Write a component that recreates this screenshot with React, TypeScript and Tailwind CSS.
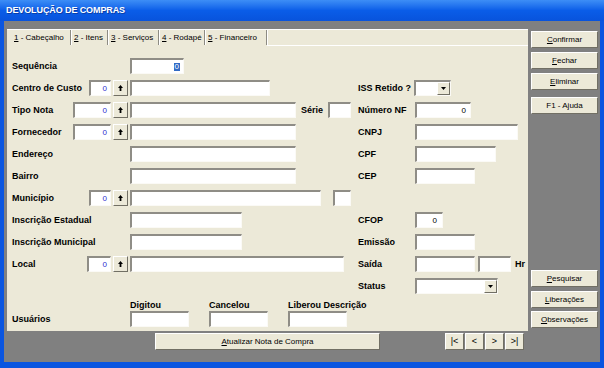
import React from "react";

type Kids = { className?: string; children?: React.ReactNode };

const sunken =
  "h-4 shrink-0 bg-white border-t-2 border-l-2 border-b border-r border-t-[#8f8d86] border-l-[#8f8d86] border-b-[#fbfaf6] border-r-[#fbfaf6]";
const raised =
  "shrink-0 bg-[#ece9d8] border border-t-white border-l-white border-b-[#716f64] border-r-[#716f64]";

function L({ className = "", children }: Kids) {
  return (
    <span className={`shrink-0 h-4 flex items-center text-[9px] font-bold leading-none whitespace-nowrap text-black ${className}`}>
      {children}
    </span>
  );
}

function Box({ className = "", children }: Kids) {
  return (
    <div className={`${sunken} flex items-center justify-end pr-[3px] text-[8px] leading-none ${className}`}>
      {children}
    </div>
  );
}

function Code({ className = "" }: { className?: string }) {
  return <Box className={`text-[#2d2dd0] ${className}`}>0</Box>;
}

function Pick() {
  return (
    <div className={`${raised} ml-[2px] w-[15px] h-4 flex items-center justify-center`}>
      <svg width="5" height="6" viewBox="0 0 5 6">
        <path d="M2.5 0L5 3H3.4V6H1.6V3H0Z" fill="#000" />
      </svg>
    </div>
  );
}

function Select({ className = "" }: { className?: string }) {
  return (
    <div className={`${sunken} flex justify-end ${className}`}>
      <div className={`${raised} w-[13px] h-full flex items-center justify-center`}>
        <svg width="5" height="3" viewBox="0 0 5 3">
          <path d="M0 0H5L2.5 3Z" fill="#000" />
        </svg>
      </div>
    </div>
  );
}

function Btn({ className = "", children }: Kids) {
  return (
    <div className={`${raised} h-[17px] flex items-center justify-center text-[8px] leading-none text-black whitespace-nowrap ${className}`}>
      {children}
    </div>
  );
}

function Row({ left, right }: { left?: React.ReactNode; right?: React.ReactNode }) {
  return (
    <div className="flex h-[22px] pt-px">
      <div className="flex w-[346px] h-4 items-center">{left}</div>
      <div className="flex h-4 items-center">{right}</div>
    </div>
  );
}

const tabs = [
  { n: "1", t: " - Cabeçalho", w: "w-[64px] pl-[7px]" },
  { n: "2", t: " - Itens", w: "w-[37px] pl-[3px]" },
  { n: "3", t: " - Serviços", w: "w-[51px] pl-[3px]" },
  { n: "4", t: " - Rodapé", w: "w-[46px] pl-[3px]" },
  { n: "5", t: " - Financeiro", w: "w-[62px] pl-[3px]" },
];

export default function App() {
  return (
    <div className="w-[604px] h-[368px] flex flex-col overflow-hidden font-['Liberation_Sans',Arial,sans-serif] select-none">
      <div className="h-[21px] shrink-0 flex items-center pl-[6px] bg-gradient-to-b from-[#3d8ef6] via-[#0a5de8] to-[#0853dc]">
        <span className="text-white text-[9px] font-bold tracking-[-0.1px] [text-shadow:1px_1px_0_#0b3fa8]">
          DEVOLUÇÃO DE COMPRAS
        </span>
      </div>

      <div className="flex-1 flex pt-2 bg-[#808080] border-x-4 border-b-[6px] border-[#0a55e0]">
        <div className="w-[524px] pl-[3px] flex flex-col">
          <div className="h-[302px] bg-[#ece9d8] border-t border-white flex flex-col">
            <div className="h-4 flex text-[8px] text-black leading-none">
              {tabs.map((t) => (
                <div
                  key={t.n}
                  className={`${t.w} h-[15px] flex items-center border-r border-[#8d8b83] shadow-[1px_0_0_#fff]`}
                >
                  <span className="whitespace-pre">
                    <u>{t.n}</u>
                    {t.t}
                  </span>
                </div>
              ))}
              <div className="flex-1 border-b border-white" />
            </div>

            <div className="pt-[11px] pl-[5px] flex flex-col">
              <Row left={<><L className="w-[118px]">Sequência</L><Box className="w-[54px] pr-[2px]"><span className="bg-[#316ac5] text-white px-px">0</span></Box></>} />
              <Row
                left={<><L className="w-[77px]">Centro de Custo</L><Code className="w-[22px]" /><Pick /><Box className="ml-[2px] w-[140px]" /></>}
                right={<><L className="w-[56px]">ISS Retido ?</L><Select className="w-[37px]" /></>}
              />
              <Row
                left={<><L className="w-[61px]">Tipo Nota</L><Code className="w-[38px]" /><Pick /><Box className="ml-[2px] w-[166px]" /><L className="ml-[5px] w-[27px]">Série</L><Box className="w-[23px]" /></>}
                right={<><L className="w-[57px]">Número NF</L><Box className="w-[56px] pr-[4px]">0</Box></>}
              />
              <Row
                left={<><L className="w-[61px]">Fornecedor</L><Code className="w-[38px]" /><Pick /><Box className="ml-[2px] w-[166px]" /></>}
                right={<><L className="w-[57px]">CNPJ</L><Box className="w-[103px]" /></>}
              />
              <Row
                left={<><L className="w-[118px]">Endereço</L><Box className="w-[166px]" /></>}
                right={<><L className="w-[57px]">CPF</L><Box className="w-[81px]" /></>}
              />
              <Row
                left={<><L className="w-[118px]">Bairro</L><Box className="w-[166px]" /></>}
                right={<><L className="w-[57px]">CEP</L><Box className="w-[60px]" /></>}
              />
              <Row
                left={<><L className="w-[77px]">Município</L><Code className="w-[22px]" /><Pick /><Box className="ml-[2px] w-[191px]" /><Box className="ml-[12px] w-[18px]" /></>}
              />
              <Row
                left={<><L className="w-[118px]">Inscrição Estadual</L><Box className="w-[112px]" /></>}
                right={<><L className="w-[57px]">CFOP</L><Box className="w-[28px] pr-[5px]">0</Box></>}
              />
              <Row
                left={<><L className="w-[118px]">Inscrição Municipal</L><Box className="w-[112px]" /></>}
                right={<><L className="w-[57px]">Emissão</L><Box className="w-[60px]" /></>}
              />
              <Row
                left={<><L className="w-[75px]">Local</L><Code className="w-[24px]" /><Pick /><Box className="ml-[2px] w-[214px]" /></>}
                right={<><L className="w-[57px]">Saída</L><Box className="w-[60px]" /><Box className="ml-[3px] w-[33px]" /><L className="ml-[4px]">Hr</L></>}
              />
              <Row right={<><L className="w-[57px]">Status</L><Select className="w-[83px]" /></>} />

              <div className="h-8 flex items-start">
                <L className="w-[118px] mt-[12px]">Usuários</L>
                <div className="flex gap-[20px]">
                  {["Digitou", "Cancelou", "Liberou Descrição"].map((u) => (
                    <div key={u} className="w-[59px] flex flex-col">
                      <span className="h-[12px] text-[9px] font-bold leading-[12px] whitespace-nowrap">{u}</span>
                      <Box className="w-[59px]" />
                    </div>
                  ))}
                </div>
              </div>
            </div>
          </div>

          <div className="flex pt-[2px]">
            <Btn className="ml-[148px] w-[225px]">
              <span><u>A</u>tualizar Nota de Compra</span>
            </Btn>
            <div className="ml-[65px] flex gap-px">
              <Btn className="w-[19px] text-[9px]">|&lt;</Btn>
              <Btn className="w-[19px] text-[9px] text-[#b5b2a6]">&lt;</Btn>
              <Btn className="w-[19px] text-[9px]">&gt;</Btn>
              <Btn className="w-[19px] text-[9px]">&gt;|</Btn>
            </div>
          </div>
        </div>

        <div className="flex-1 flex flex-col pl-[3px] pt-[2px] pb-[34px]">
          <Btn className="w-[67px]"><span><u>C</u>onfirmar</span></Btn>
          <Btn className="w-[67px] mt-[4px]"><span><u>F</u>echar</span></Btn>
          <Btn className="w-[67px] mt-[4px]"><span><u>E</u>liminar</span></Btn>
          <Btn className="w-[67px] mt-[7px]">F1 - Ajuda</Btn>
          <div className="flex-1" />
          <Btn className="w-[67px]"><span><u>P</u>esquisar</span></Btn>
          <Btn className="w-[67px] mt-[4px]"><span><u>L</u>iberações</span></Btn>
          <Btn className="w-[67px] mt-[3px]"><span><u>O</u>bservações</span></Btn>
        </div>
      </div>
    </div>
  );
}
